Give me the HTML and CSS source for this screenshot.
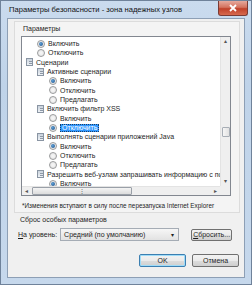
FILE: index.html
```html
<!DOCTYPE html>
<html lang="ru">
<head>
    <meta charset="UTF-8">
    <title>Параметры безопасности - зона надежных узлов</title>
    <link rel="stylesheet" href="styles.css">
</head>
<body>
    <div class="window">
        <div class="titlebar">
            <span class="title">Параметры безопасности - зона надежных узлов</span>
            <div class="close">
                <svg width="10" height="8" viewBox="0 0 10 8"><path d="M2 1 L8 7 M8 1 L2 7" stroke="#fff" stroke-width="1.8"/></svg>
            </div>
        </div>
        <div class="client">
            <div class="panel">
                <div class="label">Параметры</div>
                <div class="listbox">
                    <div class="tree">
                        <div class="row lvl1"><span class="radio on"></span>Включить</div>
                        <div class="row lvl1"><span class="radio"></span>Отключить</div>
                        <div class="row lvl0"><span class="ico"></span>Сценарии</div>
                        <div class="row lvl1"><span class="ico"></span>Активные сценарии</div>
                        <div class="row lvl2"><span class="radio on"></span>Включить</div>
                        <div class="row lvl2"><span class="radio"></span>Отключить</div>
                        <div class="row lvl2"><span class="radio"></span>Предлагать</div>
                        <div class="row lvl1"><span class="ico"></span>Включить фильтр XSS</div>
                        <div class="row lvl2"><span class="radio"></span>Включить</div>
                        <div class="row lvl2"><span class="radio on"></span><span class="sel">Отключить</span></div>
                        <div class="row lvl1"><span class="ico"></span>Выполнять сценарии приложений Java</div>
                        <div class="row lvl2"><span class="radio on"></span>Включить</div>
                        <div class="row lvl2"><span class="radio"></span>Отключить</div>
                        <div class="row lvl2"><span class="radio"></span>Предлагать</div>
                        <div class="row lvl1"><span class="ico"></span>Разрешить веб-узлам запрашивать информацию с помощью</div>
                        <div class="row lvl2"><span class="radio on"></span>Включить</div>
                    </div>
                    <div class="vscroll">
                        <span class="arrow">&#9652;</span>
                        <span class="vtrack"><span class="vthumb"></span></span>
                        <span class="arrow">&#9662;</span>
                    </div>
                    <div class="hscroll">
                        <span class="arrow">&#9666;</span>
                        <span class="htrack"><span class="hthumb">&#8942;</span></span>
                        <span class="arrow">&#9656;</span>
                    </div>
                    <div class="corner"></div>
                </div>
                <div class="note">*Изменения вступают в силу после перезапуска Internet Explorer</div>
            </div>
            <div class="reset">
                <div class="label">Сброс особых параметров</div>
                <div class="reset-row">
                    <span><u>Н</u>а уровень:</span>
                    <div class="combo">
                        <span>Средний (по умолчанию)</span>
                        <span class="drop">&#9662;</span>
                    </div>
                    <div class="btn reset-btn"><u>С</u>бросить...</div>
                </div>
            </div>
            <div class="actions">
                <div class="btn ok">OK</div>
                <div class="btn">Отмена</div>
            </div>
        </div>
    </div>
</body>
</html>
```

FILE: styles.css
```css
body {
    margin: 0;
    width: 252px;
    height: 285px;
    overflow: hidden;
    font-family: 'Liberation Sans', Arial, sans-serif;
    font-size: 7px;
    color: #1e1e1e;
}
.window {
    height: 285px;
    box-sizing: border-box;
    padding: 0 6px 6px 6px;
    background: linear-gradient(180deg, #cadbee 0%, #bfd3e9 30%, #c6d8ec 100%);
    border: 1px solid #6f829a;
    display: flex;
    flex-direction: column;
}
.titlebar {
    height: 17px;
    display: flex;
    align-items: center;
    justify-content: space-between;
}
.title {
    padding-left: 2px;
    color: #111;
    font-size: 7.6px;
}
.close {
    width: 28px;
    height: 14px;
    margin-top: -3px;
    margin-right: -3px;
    border: 1px solid #7a3b35;
    border-top: none;
    border-radius: 0 0 3px 3px;
    background: linear-gradient(180deg, #e6a99d 0%, #d4735f 45%, #c0412a 55%, #d66a4f 100%);
    display: flex;
    align-items: center;
    justify-content: center;
}
.client {
    flex: 1;
    background: #f0f0f0;
    border: 1px solid #8d9fb5;
    display: flex;
    flex-direction: column;
    padding: 2px 4px 0 6px;
}
.panel {
    border: 1px solid #dcdcdc;
    background: #f4f4f4;
    padding: 2px 8px 1px 6px;
}
.label {
    height: 10px;
    line-height: 10px;
    padding-left: 2px;
}
.listbox {
    margin-top: 2px;
    height: 158px;
    border: 1px solid #828790;
    background: #fff;
    display: grid;
    grid-template-columns: 1fr 10px;
    grid-template-rows: 1fr 9px;
}
.tree {
    overflow: hidden;
    padding-top: 2px;
    white-space: nowrap;
}
.row {
    height: 9.33px;
    line-height: 9.33px;
    display: flex;
    align-items: center;
}
.lvl0 { padding-left: 4px; }
.lvl1 { padding-left: 15px; }
.lvl2 { padding-left: 27px; }
.radio {
    width: 6px;
    height: 6px;
    border: 1px solid #9a9b9c;
    border-radius: 50%;
    background: radial-gradient(circle, #f8f8f8 0%, #e2e2e2 100%);
    margin-right: 3px;
    flex: none;
    display: flex;
    align-items: center;
    justify-content: center;
}
.radio.on::after {
    content: '';
    width: 4px;
    height: 4px;
    border-radius: 50%;
    background: radial-gradient(circle at 40% 40%, #5c9fd6 0%, #1e4f86 100%);
}
.ico {
    width: 7px;
    height: 8px;
    margin-right: 3px;
    flex: none;
    background:
        linear-gradient(#8d98a6, #8d98a6) 2px 2px / 3px 1px no-repeat,
        linear-gradient(#8d98a6, #8d98a6) 2px 4px / 3px 1px no-repeat,
        linear-gradient(#c9d2dc, #eef2f6);
    border: 1px solid #8a95a3;
    box-sizing: border-box;
}
.sel {
    background: #3399ff;
    color: #fff;
    border: 1px dotted #1d3f66;
    padding: 0 1px;
    height: 8px;
    line-height: 8px;
    box-sizing: border-box;
    display: flex;
    align-items: center;
}
.vscroll, .hscroll {
    background: #efefef;
    display: flex;
    align-items: center;
    color: #555;
    font-size: 6px;
}
.vscroll {
    flex-direction: column;
    border-left: 1px solid #e3e3e3;
}
.hscroll {
    border-top: 1px solid #e3e3e3;
}
.arrow {
    flex: none;
    width: 9px;
    height: 9px;
    line-height: 9px;
    text-align: center;
}
.vtrack, .htrack {
    flex: 1;
    display: flex;
}
.vtrack {
    flex-direction: column;
    justify-content: flex-end;
    padding-bottom: 40px;
    align-items: center;
}
.vthumb {
    width: 6px;
    height: 8px;
    border: 1px solid #a8aeb6;
    border-radius: 1px;
    background: linear-gradient(90deg, #f6f6f6, #e2e2e2);
}
.htrack {
    align-items: center;
    padding-left: 1px;
}
.hthumb {
    width: 98px;
    height: 6px;
    border: 1px solid #9aa0a8;
    border-radius: 1px;
    background: linear-gradient(180deg, #f4f4f4, #dcdcdc);
    line-height: 6px;
    font-size: 6px;
    text-align: center;
}
.corner {
    background: #efefef;
}
.note {
    margin-top: 5px;
    height: 10px;
    line-height: 10px;
    font-size: 6.4px;
    padding-left: 1px;
    white-space: nowrap;
}
.reset {
    padding: 2px 4px 0 4px;
}
.reset-row {
    margin-top: 3px;
    display: flex;
    align-items: center;
}
.combo {
    margin-left: 3px;
    width: 119px;
    height: 13px;
    border: 1px solid #a5acb5;
    background: linear-gradient(180deg, #f6f6f6, #e2e2e2);
    display: flex;
    align-items: center;
    justify-content: space-between;
    padding: 0 4px 0 3px;
    box-sizing: border-box;
}
.drop {
    font-size: 6px;
}
.btn {
    height: 12px;
    border: 1px solid #707070;
    border-radius: 2px;
    background: linear-gradient(180deg, #f2f2f2 0%, #ebebeb 50%, #dddddd 51%, #cfcfcf 100%);
    box-sizing: border-box;
    display: flex;
    align-items: center;
    justify-content: center;
}
.reset-btn {
    margin-left: 12px;
    width: 41px;
}
.actions {
    margin-top: auto;
    margin-bottom: 10px;
    display: flex;
    justify-content: flex-end;
    gap: 6px;
    padding-right: 1px;
}
.actions .btn {
    width: 47px;
    height: 13px;
}
.actions .ok {
    border-color: #3c7fb1;
    box-shadow: inset 0 0 0 1px #9fdcf8;
}
```
